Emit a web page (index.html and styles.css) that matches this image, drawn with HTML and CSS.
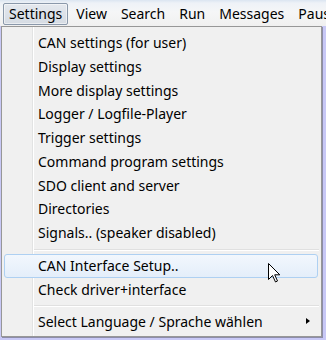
FILE: index.html
```html
<!DOCTYPE html>
<html lang="en">

<head>
  <meta charset="UTF-8">
  <title>Settings menu</title>
  <link rel="stylesheet" href="styles.css">
</head>

<body>

  <div class="menubar">
    <span class="menu-title active">Settings</span>
    <span class="menu-title">View</span>
    <span class="menu-title">Search</span>
    <span class="menu-title">Run</span>
    <span class="menu-title">Messages</span>
    <span class="menu-title">Pause</span>
  </div>

  <div class="dropdown">
    <ul class="menu-list">
      <li class="item">CAN settings (for user)</li>
      <li class="item">Display settings</li>
      <li class="item">More display settings</li>
      <li class="item">Logger / Logfile-Player</li>
      <li class="item">Trigger settings</li>
      <li class="item">Command program settings</li>
      <li class="item">SDO client and server</li>
      <li class="item">Directories</li>
      <li class="item">Signals.. (speaker disabled)</li>
      <li class="sep"></li>
      <li class="item hover">CAN Interface Setup..</li>
      <li class="item">Check driver+interface</li>
      <li class="sep"></li>
      <li class="item submenu">Select Language / Sprache wählen<span class="arrow"></span></li>
    </ul>
  </div>

  <!-- mouse pointer -->
  <svg class="cursor" width="13" height="20" viewBox="0 0 13 20">
    <path d="M0.5 0.5 L0.5 16.5 L4.5 12.5 L7.5 19 L9.5 18 L6.7 11.8 L11.8 11.8 Z" fill="#fff" stroke="#000" stroke-width="1" stroke-linejoin="miter"/>
  </svg>

</body>

</html>
```

FILE: styles.css
```css
* {
  margin: 0;
  padding: 0;
  box-sizing: border-box;
}

body {
  font-family: "Noto Sans", "Open Sans", sans-serif;
  font-size: 14px;
  color: #000;
  background-color: #c8c8f6;
  width: 326px;
  height: 340px;
  overflow: hidden;
  position: relative;
}

.menubar {
  display: flex;
  height: 26px;
  padding: 3px 0 0 3px;
  background: linear-gradient(#dbe5f1 0, #eef2f7 3px, #f5f6f7 12px, #f0f0f0 100%);
  white-space: nowrap;
  overflow: hidden;
}

.menu-title {
  flex-shrink: 0;
  height: 22px;
  line-height: 19px;
  padding: 0 5px;
  margin-right: 2px;
  border: 1px solid transparent;
  border-radius: 2px;
}

.menu-title.active {
  background: linear-gradient(#e4e8ee, #d5dbe3);
  border-color: #8a98aa;
  box-shadow: inset 0 0 0 1px rgba(255, 255, 255, 0.5);
}

.dropdown {
  width: 321px;
  margin-left: 1px;
  border: 1px solid #979797;
  background-color: #f0f0f0;
  background-image: linear-gradient(to right, transparent 30px, #e2e3e3 30px, #e2e3e3 31px, #fff 31px, #fff 32px, transparent 32px);
  box-shadow: 1px 1px 0 #8c8ca8;
}

.menu-list {
  list-style: none;
  padding: 4px 0 2px;
}

.item {
  position: relative;
  height: 23.75px;
  line-height: 21.75px;
  margin: 0 3px 0 2px;
  padding-left: 33px;
  border: 1px solid transparent;
  border-radius: 3px;
  white-space: nowrap;
}

.item.hover {
  border-color: #aed0f2;
  background: linear-gradient(#f2f7fd, #e4eefa);
}

.sep {
  height: 9px;
  margin-left: 32px;
  margin-right: 2px;
  background: linear-gradient(transparent 4px, #e0e0e0 4px, #e0e0e0 5px, #fff 5px, #fff 6px, transparent 6px);
}

.arrow {
  position: absolute;
  right: 7px;
  top: 7px;
  width: 0;
  height: 0;
  border-top: 3.5px solid transparent;
  border-bottom: 3.5px solid transparent;
  border-left: 4px solid #000;
}

.cursor {
  position: absolute;
  left: 268px;
  top: 263px;
}
```
